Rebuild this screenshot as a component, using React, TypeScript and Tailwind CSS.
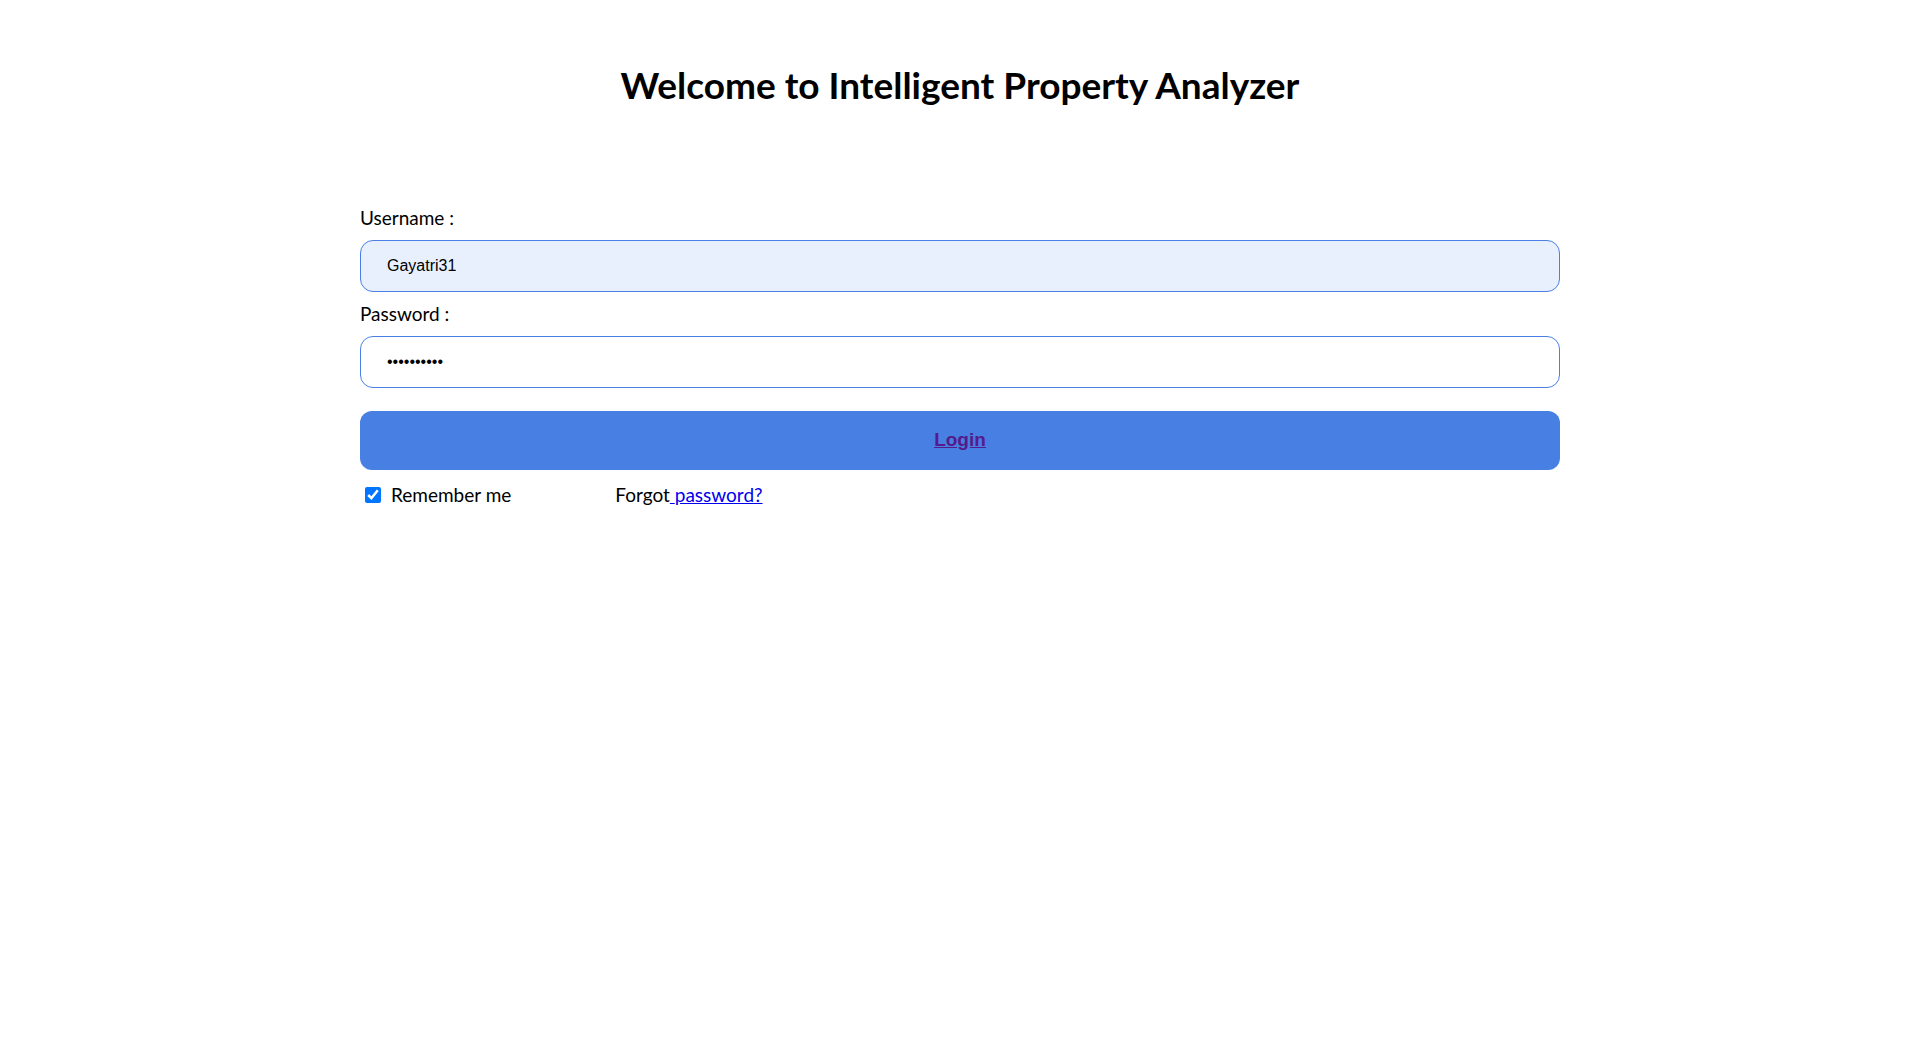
function App() {
  return (
    <section className="min-h-screen bg-white text-black font-['Lato',sans-serif]">
      <h1 className="pt-[63px] text-center text-[37px] font-bold leading-[44px]">
        Welcome to Intelligent Property Analyzer
      </h1>

      <form className="w-[1200px] mx-auto mt-[100px]">
        <label htmlFor="username" className="block text-[19px] leading-[22px]">
          Username :
        </label>
        <input
          id="username"
          type="text"
          defaultValue="Gayatri31"
          className="mt-[11px] block w-full h-[52px] rounded-[13px] border border-[#4a80e5] bg-[#e8f0fe] pl-[26px] text-[16px] font-['Liberation_Sans',Arial,sans-serif] outline-none"
        />

        <label htmlFor="password" className="block mt-[11px] text-[19px] leading-[22px]">
          Password :
        </label>
        <input
          id="password"
          type="password"
          defaultValue="Gayatri@31"
          className="mt-[11px] block w-full h-[52px] rounded-[13px] border border-[#4a80e5] bg-white pl-[26px] text-[16px] font-['Liberation_Sans',Arial,sans-serif] outline-none"
        />

        <button
          type="submit"
          className="mt-[23px] block w-full h-[59px] rounded-[12px] bg-[#487fe2]"
        >
          <a
            href="#"
            className="text-[19px] font-bold text-[#551a8b] underline font-['Liberation_Sans',Arial,sans-serif]"
          >
            Login
          </a>
        </button>

        <div className="flex items-center mt-[13px] text-[19px] leading-[24px]">
          <input
            type="checkbox"
            defaultChecked
            className="ml-[5px] w-[16px] h-[16px] accent-[#0075ff]"
          />
          <span className="ml-[10px]">Remember me</span>
          <span className="ml-[104px]">
            Forgot
            <a href="#" className="text-[#0000ee] underline">
              {" "}password?
            </a>
          </span>
        </div>
      </form>
    </section>
  );
}

export default App;
